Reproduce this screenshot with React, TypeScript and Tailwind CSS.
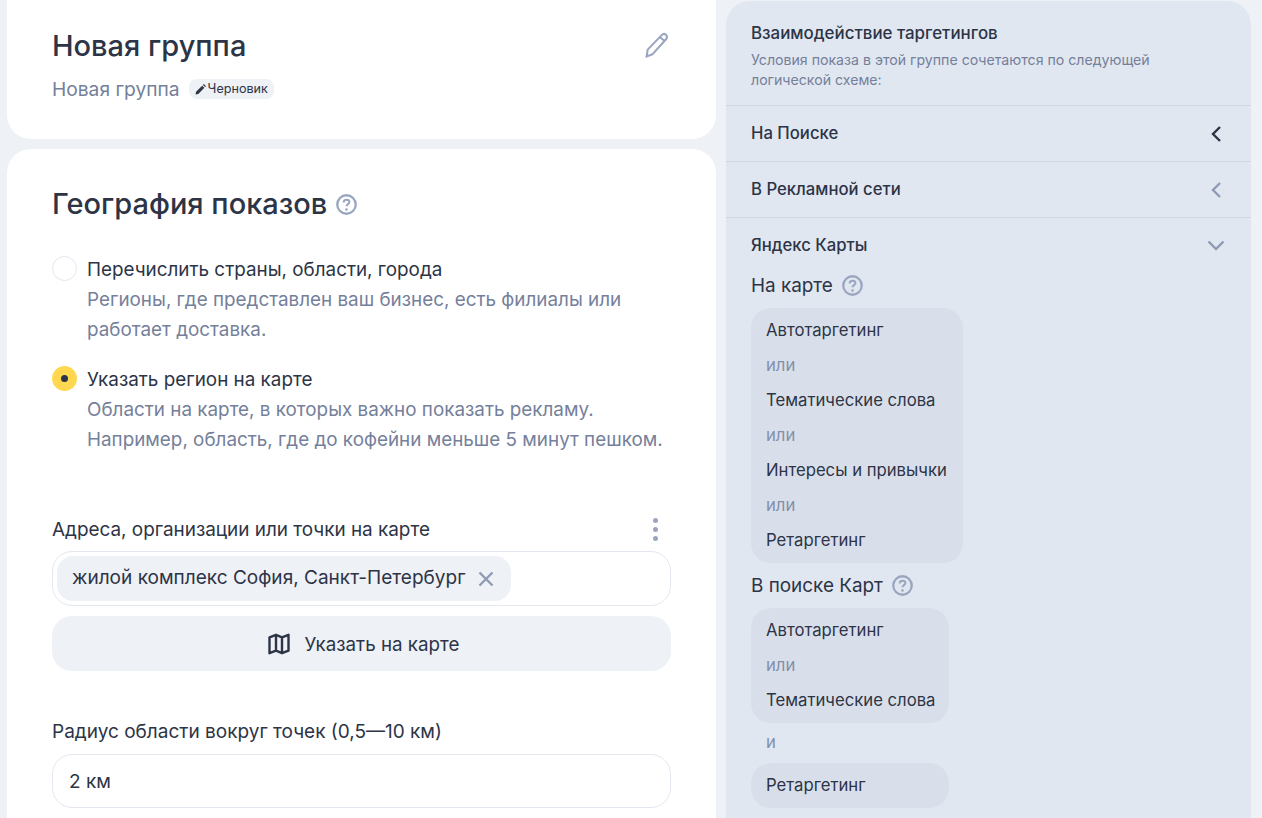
const font = { fontFamily: 'Inter, "Noto Sans", sans-serif' };

function HelpIcon({ size = 21 }: { size?: number }) {
  return (
    <svg width={size} height={size} viewBox="0 0 20 20" fill="none" className="shrink-0">
      <circle cx="10" cy="10" r="8.8" stroke="#9aa6c0" strokeWidth="2.2" />
      <path d="M7.3 8c0-1.6 1.2-2.6 2.8-2.6 1.6 0 2.7 1 2.7 2.3 0 2-2.8 2-2.8 4" stroke="#9aa6c0" strokeWidth="1.9" fill="none" />
      <circle cx="10" cy="14.7" r="1.2" fill="#9aa6c0" />
    </svg>
  );
}

function Radio({ checked, title, lines }: { checked?: boolean; title: string; lines: string[] }) {
  return (
    <div className="flex">
      <div className="w-[35px] shrink-0 pt-[2px]">
        {checked ? (
          <div className="w-[25px] h-[25px] rounded-full bg-[#ffd84f] flex items-center justify-center">
            <div className="w-[7px] h-[7px] rounded-full bg-[#2c3446]" />
          </div>
        ) : (
          <div className="w-[25px] h-[25px] rounded-full border border-[#e3e7f0] bg-white" />
        )}
      </div>
      <div className="pt-[1px] text-[18.85px] leading-[30px]">
        <div className="text-[#2c3446]">{title}</div>
        {lines.map((l) => (
          <div key={l} className="text-[#75809a]">{l}</div>
        ))}
      </div>
    </div>
  );
}

function AccordionRow({ label, dark }: { label: string; dark?: boolean }) {
  return (
    <div className="h-[56px] border-b border-[#cfd6e4] pl-[25px] pr-[26px] flex items-center justify-between">
      <span className="text-[16.7px] font-medium text-[#2c3446]">{label}</span>
      <svg width="16" height="20" viewBox="0 0 16 20" fill="none">
        <path d="M11 3 4 10l7 7" stroke={dark ? '#2c3446' : '#8f9bb5'} strokeWidth="2.4" />
      </svg>
    </div>
  );
}

function Group({ items, width }: { items: string[]; width: string }) {
  return (
    <div className={`${width} rounded-[20px] bg-[#d9dfea] pl-[15px] py-[5px] text-[16.7px] leading-[35px]`}>
      {items.map((item, i) =>
        i % 2 === 1 ? (
          <div key={i} className="text-[#8490aa]">{item}</div>
        ) : (
          <div key={i} className="text-[#2c3446] whitespace-nowrap">{item}</div>
        )
      )}
    </div>
  );
}

export default function App() {
  return (
    <div style={font} className="h-[818px] w-[1262px] overflow-hidden bg-[#eef1f6] flex">
      <div className="ml-[7px] w-[709px] flex flex-col gap-[10px]">
        <div className="h-[139px] bg-white rounded-b-[24px] pl-[45px] pr-[46px] pt-[27px] flex justify-between items-start">
          <div>
            <h1 className="text-[29px] leading-[38px] font-medium text-[#2c3446]">Новая группа</h1>
            <div className="mt-[9px] flex items-center gap-[9px]">
              <span className="text-[19.2px] leading-[30px] text-[#75809a]">Новая группа</span>
              <span className="h-[20px] rounded-[8px] bg-[#eef1f6] px-[6px] flex items-center gap-[2px] text-[12.6px] text-[#2c3446]">
                <svg width="11" height="11" viewBox="0 0 10 10">
                  <path d="M0.5 9.5 1 7 6.5 1.5 8.5 3.5 3 9Z M7.2 0.8 8 0 10 2 9.2 2.8Z" fill="#2c3446" />
                </svg>
                Черновик
              </span>
            </div>
          </div>
          <svg width="27" height="27" viewBox="0 0 26 26" fill="none" className="mt-[5px]">
            <path d="M3.5 23.5 4.5 17 18 3c1.3-1.3 3-1.3 4.2-.2 1.2 1.2 1.2 3 0 4.2L9 21.5Z M16.5 5l4.5 4" stroke="#9aa6c0" strokeWidth="2" />
          </svg>
        </div>

        <div className="flex-1 bg-white rounded-t-[24px] pl-[45px] pr-[45px] pt-[35px]">
          <div className="flex items-center gap-[9px]">
            <h2 className="text-[29px] leading-[40px] font-medium text-[#2c3446]">География показов</h2>
            <HelpIcon />
          </div>
          <div className="mt-[30px] flex flex-col gap-[19px]">
            <Radio
              title="Перечислить страны, области, города"
              lines={['Регионы, где представлен ваш бизнес, есть филиалы или', 'работает доставка.']}
            />
            <Radio
              checked
              title="Указать регион на карте"
              lines={['Области на карте, в которых важно показать рекламу.', 'Например, область, где до кофейни меньше 5 минут пешком.']}
            />
          </div>

          <div className="mt-[59px] flex items-center justify-between text-[18.9px] text-[#2c3446]">
            <span className="h-[30px] leading-[32px]">Адреса, организации или точки на карте</span>
            <div className="flex flex-col gap-[4px] mr-[13px]">
              <div className="w-[5px] h-[5px] rounded-full bg-[#9aa6c0]" />
              <div className="w-[5px] h-[5px] rounded-full bg-[#9aa6c0]" />
              <div className="w-[5px] h-[5px] rounded-full bg-[#9aa6c0]" />
            </div>
          </div>
          <div className="mt-[7px] h-[55px] rounded-[20px] border border-[#e3e7f0] p-[4px] flex">
            <div className="h-[45px] rounded-[16px] bg-[#eef1f6] pl-[15px] pr-[16px] flex items-center gap-[11px] text-[19.05px] text-[#2c3446]">
              жилой комплекс София, Санкт-Петербург
              <svg width="18" height="18" viewBox="0 0 18 18" fill="none">
                <path d="M2.5 2.5l13 13M15.5 2.5l-13 13" stroke="#8f9bb5" strokeWidth="2.4" />
              </svg>
            </div>
          </div>
          <div className="mt-[10px] h-[55px] rounded-[20px] bg-[#eef1f6] pl-[4px] flex items-center justify-center gap-[15px] text-[18.8px] text-[#2c3446]">
            <svg width="22" height="22" viewBox="0 0 22 22" fill="none">
              <path d="M1.5 4.3 8 1.8l6 2.5 6.5-2.5v15.9L14 20.2l-6-2.5-6.5 2.5Z M8 1.8v15.9 M14 4.3v15.9" stroke="#2c3446" strokeWidth="2.4" strokeLinejoin="round" />
            </svg>
            <span className="h-[30px] leading-[32px]">Указать на карте</span>
          </div>

          <div className="mt-[45px] h-[30px] text-[19px] leading-[32px] text-[#2c3446]">Радиус области вокруг точек (0,5—10 км)</div>
          <div className="mt-[8px] h-[54px] rounded-[20px] border border-[#e3e7f0] px-[16px] pt-[2px] flex items-center text-[19px] text-[#2c3446]">2 км</div>
        </div>
      </div>

      <div className="ml-[10px] mt-[1px] w-[525px] bg-[#e1e7f1] rounded-t-[24px]">
        <div className="border-b border-[#cfd6e4] h-[105px] pl-[25px] pr-[25px] pt-[20px]">
          <div className="text-[16.9px] leading-[24px] font-medium text-[#2c3446]">Взаимодействие таргетингов</div>
          <div className="mt-[5px] text-[14.15px] leading-[20px] text-[#75809a]">
            Условия показа в этой группе сочетаются по следующей логической схеме:
          </div>
        </div>
        <AccordionRow label="На Поиске" dark />
        <AccordionRow label="В Рекламной сети" />
        <div className="pl-[25px] pr-[25px] pt-[15px]">
          <div className="flex items-center justify-between h-[24px]">
            <span className="h-[24px] leading-[25px] text-[16.7px] font-medium text-[#2c3446]">Яндекс Карты</span>
            <svg width="20" height="16" viewBox="0 0 20 16" fill="none">
              <path d="M2.5 4.5 10 12l7.5-7.5" stroke="#8f9bb5" strokeWidth="2.4" />
            </svg>
          </div>
          <div className="mt-[13px] flex items-center gap-[9px] text-[18.9px] text-[#2c3446]">
            <span className="h-[30px] leading-[32px]">На карте</span> <HelpIcon />
          </div>
          <div className="mt-[8px]">
            <Group width="w-[212px]" items={['Автотаргетинг', 'или', 'Тематические слова', 'или', 'Интересы и привычки', 'или', 'Ретаргетинг']} />
          </div>
          <div className="mt-[7px] flex items-center gap-[9px] text-[18.9px] text-[#2c3446]">
            <span className="h-[30px] leading-[32px]">В поиске Карт</span> <HelpIcon />
          </div>
          <div className="mt-[8px]">
            <Group width="w-[198px]" items={['Автотаргетинг', 'или', 'Тематические слова']} />
          </div>
          <div className="pl-[15px] h-[40px] text-[16.7px] leading-[38px] text-[#8490aa]">и</div>
          <Group width="w-[198px]" items={['Ретаргетинг']} />
        </div>
      </div>
    </div>
  );
}
